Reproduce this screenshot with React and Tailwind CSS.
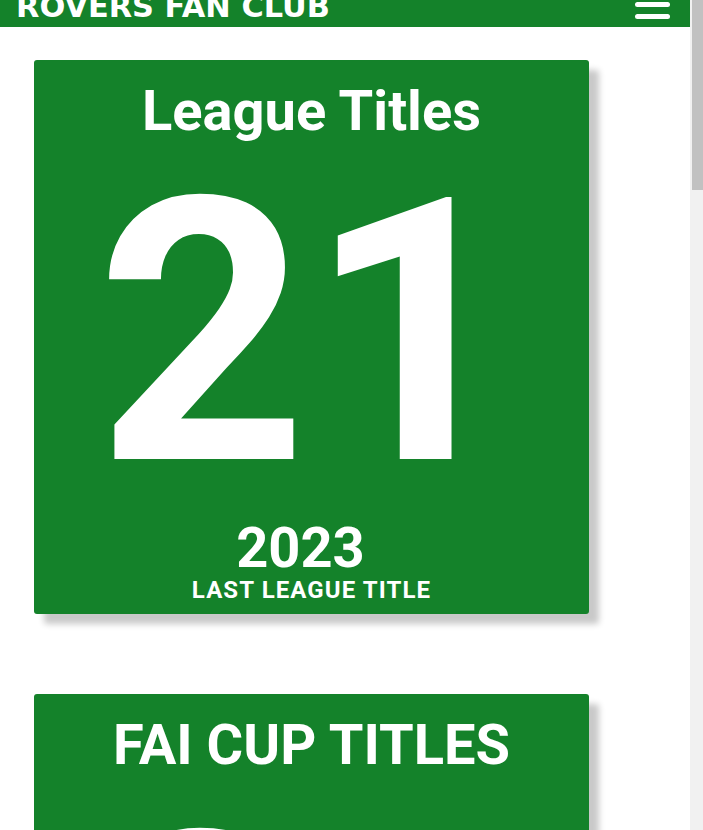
const cards = [
  { title: 'League Titles', count: '21', year: '2023', label: 'LAST LEAGUE TITLE' },
  { title: 'FAI CUP TITLES', count: '25', year: '2019', label: 'LAST FAI CUP TITLE' },
  { title: 'LEAGUE CUPS', count: '2', year: '2013', label: 'LAST LEAGUE CUP' },
  { title: 'SHIELD TITLES', count: '18', year: '1965', label: 'LAST SHIELD TITLE' },
  { title: 'LEINSTER CUPS', count: '18', year: '1997', label: 'LAST LEINSTER CUP' },
]

function StatCard({ title, count, year, label }) {
  return (
    <div className="w-[555px] ml-[34px] mb-[80px] rounded-[3px] bg-[#14822a] text-white text-center pt-[23px] pb-[11px] shadow-[10px_10px_6px_#c9c9c9]">
      <h2 className="text-[56px] leading-[56px] font-bold">{title}</h2>
      <p className="mt-[11px] pr-[8px] text-[368px] leading-[368px] font-bold">{count}</p>
      <p className="mt-[2px] pr-[22px] text-[56px] leading-[56px] font-bold">{year}</p>
      <p className="mt-[1px] text-[24px] leading-[26px] tracking-[1.1px] font-bold">{label}</p>
    </div>
  )
}

export default function App() {
  return (
    <div className="h-screen flex overflow-hidden bg-white font-['Roboto',sans-serif]">
      <div className="flex-1 min-w-0 overflow-hidden">
        <header className="-mt-[15px] h-[42px] bg-[#14822a] flex items-start justify-between pl-[16px] pr-[20px]">
          <h1 className="mt-[7px] text-[30.4px] leading-[30px] font-bold text-white font-['DejaVu_Sans',Verdana,sans-serif]">ROVERS FAN CLUB</h1>
          <button className="mt-[5px] flex flex-col gap-[7px]" aria-label="Menu">
            <span className="block w-[35px] h-[5px] rounded-full bg-white" />
            <span className="block w-[35px] h-[5px] rounded-full bg-white" />
            <span className="block w-[35px] h-[5px] rounded-full bg-white" />
          </button>
        </header>

        <main className="pt-[33px] pb-[200px]">
          {cards.map(c => (
            <StatCard key={c.title} {...c} />
          ))}
        </main>
      </div>

      {/* scrollbar */}
      <div className="w-[13px] shrink-0 bg-[#f1f1f1]">
        <div className="ml-[2px] h-[190px] bg-[#c1c1c1]" />
      </div>
    </div>
  )
}
